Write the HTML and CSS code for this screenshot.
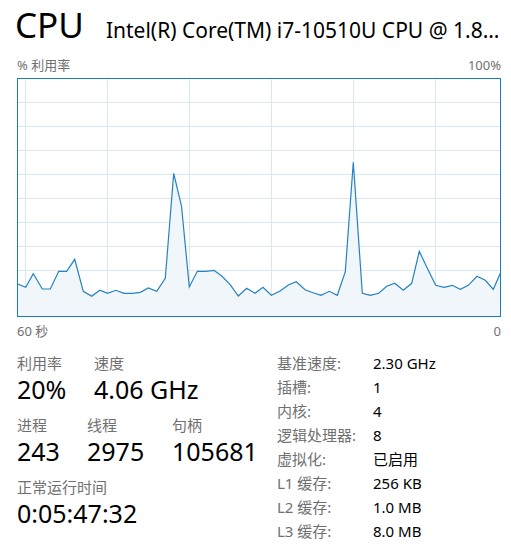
FILE: index.html
```html
<!DOCTYPE html>
<html lang="zh-CN">
<head>
<meta charset="utf-8">
<title>CPU</title>
<link rel="stylesheet" href="styles.css">
</head>
<body>
<div class="page">
  <header class="head">
    <h1 class="title">CPU</h1>
    <div class="model">Intel(R) Core(TM) i7-10510U CPU @ 1.80GHz</div>
  </header>
  <div class="axis axis-top"><span>% 利用率</span><span>100%</span></div>
  <div class="chart">
    <svg class="chart-svg" width="482" height="237" viewBox="18 79 482 237" xmlns="http://www.w3.org/2000/svg">
      <g class="grid">
        <line x1="25.5" y1="79" x2="25.5" y2="316"/>
        <line x1="107.5" y1="79" x2="107.5" y2="316"/>
        <line x1="189.5" y1="79" x2="189.5" y2="316"/>
        <line x1="271.5" y1="79" x2="271.5" y2="316"/>
        <line x1="353.5" y1="79" x2="353.5" y2="316"/>
        <line x1="435.5" y1="79" x2="435.5" y2="316"/>
        <line x1="18" y1="102.5" x2="500" y2="102.5"/>
        <line x1="18" y1="126.5" x2="500" y2="126.5"/>
        <line x1="18" y1="150.5" x2="500" y2="150.5"/>
        <line x1="18" y1="174.5" x2="500" y2="174.5"/>
        <line x1="18" y1="198.5" x2="500" y2="198.5"/>
        <line x1="18" y1="222.5" x2="500" y2="222.5"/>
        <line x1="18" y1="246.5" x2="500" y2="246.5"/>
        <line x1="18" y1="270.5" x2="500" y2="270.5"/>
        <line x1="18" y1="294.5" x2="500" y2="294.5"/>
      </g>
      <polygon class="area" points="17.7,316 17.7,284 25.7,287.3 33.3,273.7 42.3,289 50.3,289 58.7,271.3 66.7,271.3 74.7,259.3 83.3,291.3 91.7,296.3 99.7,290.3 107.7,293.3 115.7,290.3 124,293.3 132.3,293.3 140.3,292.3 148.3,288 156.7,291.3 165.3,278.3 173.7,173.3 181.5,206 189.3,287 197.3,271.3 205.7,271.3 214,270.3 221.7,276 230,284.3 238.3,296 246.7,288.3 255,293.3 263,287.3 271.3,295.3 279.7,291.3 288.7,284.7 296.3,281.7 305,289.7 313,292.7 321,295.3 329.3,291.3 337.3,295.3 345.3,271.7 353.3,162.3 362.3,293.3 370.3,295.3 378.7,293.3 386.7,286.3 394.7,283.3 403.3,290.3 411.7,283.3 419.3,251.3 427.3,268.3 435.7,285.3 444,287.3 452.3,285.3 460.3,289.3 468.3,285.3 477,276.3 485.3,280.3 493.3,289.3 500.7,272.3 500.7,316"/>
      <polyline class="line" points="17.7,284 25.7,287.3 33.3,273.7 42.3,289 50.3,289 58.7,271.3 66.7,271.3 74.7,259.3 83.3,291.3 91.7,296.3 99.7,290.3 107.7,293.3 115.7,290.3 124,293.3 132.3,293.3 140.3,292.3 148.3,288 156.7,291.3 165.3,278.3 173.7,173.3 181.5,206 189.3,287 197.3,271.3 205.7,271.3 214,270.3 221.7,276 230,284.3 238.3,296 246.7,288.3 255,293.3 263,287.3 271.3,295.3 279.7,291.3 288.7,284.7 296.3,281.7 305,289.7 313,292.7 321,295.3 329.3,291.3 337.3,295.3 345.3,271.7 353.3,162.3 362.3,293.3 370.3,295.3 378.7,293.3 386.7,286.3 394.7,283.3 403.3,290.3 411.7,283.3 419.3,251.3 427.3,268.3 435.7,285.3 444,287.3 452.3,285.3 460.3,289.3 468.3,285.3 477,276.3 485.3,280.3 493.3,289.3 500.7,272.3"/>
    </svg>
  </div>
  <div class="axis axis-bottom"><span>60 秒</span><span>0</span></div>

  <section class="stats">
    <div class="live">
      <div class="row">
        <div class="stat w-util"><div class="label">利用率</div><div class="value">20%</div></div>
        <div class="stat"><div class="label">速度</div><div class="value">4.06 GHz</div></div>
      </div>
      <div class="row">
        <div class="stat w-proc"><div class="label">进程</div><div class="value">243</div></div>
        <div class="stat w-thread"><div class="label">线程</div><div class="value">2975</div></div>
        <div class="stat"><div class="label">句柄</div><div class="value">105681</div></div>
      </div>
      <div class="row">
        <div class="stat"><div class="label">正常运行时间</div><div class="value">0:05:47:32</div></div>
      </div>
    </div>
    <dl class="specs">
      <dt>基准速度:</dt><dd>2.30 GHz</dd>
      <dt>插槽:</dt><dd>1</dd>
      <dt>内核:</dt><dd>4</dd>
      <dt>逻辑处理器:</dt><dd>8</dd>
      <dt>虚拟化:</dt><dd>已启用</dd>
      <dt>L1 缓存:</dt><dd>256 KB</dd>
      <dt>L2 缓存:</dt><dd>1.0 MB</dd>
      <dt>L3 缓存:</dt><dd>8.0 MB</dd>
    </dl>
  </section>
</div>
</body>
</html>
```

FILE: styles.css
```css
* { box-sizing: border-box; }
html, body { margin: 0; padding: 0; background: #fff; }
body {
  font-family: "Noto Sans", "Noto Sans CJK SC", sans-serif;
  color: #000;
}
.page {
  width: 511px;
  height: 560px;
  padding: 3px 10px 0 17px;
  overflow: hidden;
}
.head {
  display: flex;
  align-items: baseline;
  gap: 22px;
  height: 44px;
}
.title {
  margin: 0 0 0 -2px;
  font-size: 35px;
  font-weight: 400;
  line-height: 44px;
  flex: none;
}
.model {
  font-size: 21px;
  line-height: 28px;
  white-space: nowrap;
  overflow: hidden;
  text-overflow: ellipsis;
  min-width: 0;
  flex: 1;
}
.axis {
  display: flex;
  justify-content: space-between;
  font-size: 13px;
  line-height: 16px;
  color: #707070;
}
.axis-top { margin-top: 10px; margin-bottom: 5px; }
.axis-bottom { margin-top: 6px; }
.chart {
  border: 1px solid #1b7bbd;
  height: 239px;
}
.chart-svg { display: block; }
.grid line { stroke: #d9e9f3; stroke-width: 1; }
.area { fill: #f1f6fa; }
.line { fill: none; stroke: #2582c0; stroke-width: 1.2; stroke-linejoin: miter; }

.stats {
  display: flex;
  margin-top: 12px;
}
.live {
  width: 260px;
  flex: none;
  padding-top: 4px;
}
.row { display: flex; margin-bottom: 11px; }
.stat { flex: none; }
.w-util { width: 77px; }
.w-proc { width: 70px; }
.w-thread { width: 85px; }
.label {
  font-size: 15px;
  line-height: 17px;
  color: #707070;
}
.value {
  font-size: 25px;
  line-height: 34px;
  color: #000;
  white-space: nowrap;
}
.specs {
  margin: 0;
  display: grid;
  grid-template-columns: 96px auto;
  font-size: 15px;
  line-height: 24px;
}
.specs dt { color: #707070; white-space: nowrap; }
.specs dd { margin: 0; color: #000; white-space: nowrap; }
```
